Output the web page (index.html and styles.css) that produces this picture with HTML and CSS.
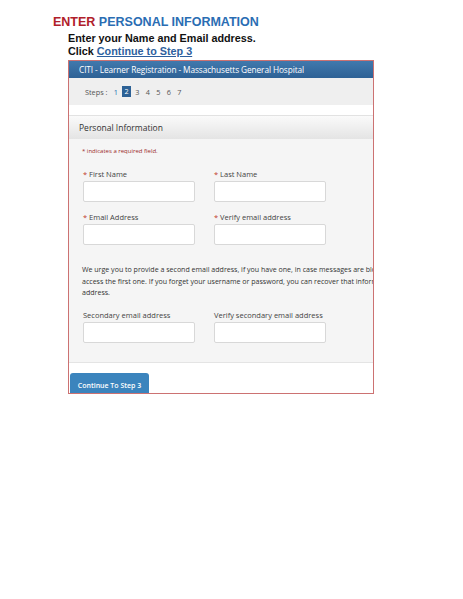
FILE: index.html
```html
<!DOCTYPE html>
<html>
<head>
<meta charset="utf-8">
<link rel="stylesheet" href="styles.css">
</head>
<body>
<div class="doc">
  <div class="title"><span class="red">ENTER</span> <span class="blue">PERSONAL INFORMATION</span></div>
  <div class="instr first">Enter your Name and Email address.</div>
  <div class="instr">Click <a class="lnk" href="#">Continue to Step 3</a></div>

  <div class="frame">
    <div class="appbar">CITI - Learner Registration - Massachusetts General Hospital</div>
    <div class="steps">
      <span class="steplabel">Steps :</span>
      <span class="step done">1</span>
      <span class="step cur">2</span>
      <span class="step">3</span>
      <span class="step">4</span>
      <span class="step">5</span>
      <span class="step">6</span>
      <span class="step">7</span>
    </div>
    <div class="gap"></div>
    <div class="panel">
      <div class="panel-head">Personal Information</div>
      <div class="panel-body">
        <div class="req">* indicates a required field.</div>
        <div class="row">
          <div class="field"><div class="lbl"><span class="ast">*</span> First Name</div><div class="inp"></div></div>
          <div class="field"><div class="lbl"><span class="ast">*</span> Last Name</div><div class="inp"></div></div>
        </div>
        <div class="row">
          <div class="field"><div class="lbl"><span class="ast">*</span> Email Address</div><div class="inp"></div></div>
          <div class="field"><div class="lbl"><span class="ast">*</span> Verify email address</div><div class="inp"></div></div>
        </div>
        <p class="para">We urge you to provide a second email address, if you have one, in case messages are blocked or you lose the ability to<br>access the first one. If you forget your username or password, you can recover that information using either email<br>address.</p>
        <div class="row">
          <div class="field"><div class="lbl">Secondary email address</div><div class="inp"></div></div>
          <div class="field"><div class="lbl">Verify secondary email address</div><div class="inp"></div></div>
        </div>
      </div>
    </div>
    <div class="foot">
      <div class="btn">Continue To Step 3</div>
    </div>
  </div>
</div>
</body>
</html>
```

FILE: styles.css
```css
html, body { margin: 0; padding: 0; background: #fff; }
body { font-family: "Liberation Sans", Arial, sans-serif; }
.doc { padding: 15px 0 0 53px; }
.title { font-size: 12.5px; font-weight: bold; line-height: 15px; }
.red { color: #b0202a; }
.blue { color: #2a6db3; }
.instr { font-size: 10.8px; font-weight: bold; color: #111; padding-left: 15px; line-height: 13px; }
.instr.first { margin-top: 2px; }
.lnk { color: #2d5f9e; text-decoration: underline; }

.frame {
  margin: 2px 0 0 15px;
  width: 304px;
  height: 332px;
  border: 1.5px solid #cc7272;
  overflow: hidden;
  font-family: "Open Sans", sans-serif;
  background: #fff;
}
.appbar {
  height: 17px;
  line-height: 17px;
  background: linear-gradient(#4179ad, #2d6195);
  color: #fff;
  font-size: 8.3px;
  padding-left: 10px;
  white-space: nowrap;
  letter-spacing: -0.1px;
}
.steps {
  height: 27px;
  background: #efefef;
  display: flex;
  align-items: center;
  padding-left: 16px;
  font-size: 7.3px;
  color: #555;
}
.steplabel { margin-right: 3px; }
.step { width: 10.5px; text-align: center; }
.step.done { color: #2d6fb0; }
.step.cur { background: #2d6195; color: #fff; width: 9px; height: 11px; line-height: 11px; margin: 0 1px; }
.gap { height: 10px; background: #fff; }
.panel { width: 400px; }
.panel-head {
  height: 23px;
  line-height: 23px;
  border-top: 1px solid #e2e2e2;
  background: linear-gradient(#fafafa, #e4e4e4);
  padding-left: 10px;
  font-size: 8.5px;
  color: #333;
}
.panel-body {
  background: #f5f5f5;
  height: 224px;
  padding: 8px 0 0 13px;
  box-sizing: border-box;
  border-bottom: 1px solid #e4e4e4;
}
.req { font-size: 6px; color: #9b2a2a; line-height: 9px; }
.row { display: flex; margin-top: 13px; }
.row + .row { margin-top: 10px; }
.field { width: 130px; padding-left: 1px; }
.lbl { font-size: 7.5px; color: #444; line-height: 10px; margin-bottom: 2px; }
.ast { color: #c0392b; }
.inp { width: 110px; height: 19px; background: #fff; border: 1px solid #d8d8d8; border-radius: 2px; }
.para { margin: 19px 0 0; font-size: 7.05px; line-height: 11.5px; color: #333; white-space: nowrap; }
.para + .row { margin-top: 11px; }
.foot { padding: 10px 0 0 1px; }
.btn {
  width: 79px;
  height: 24px;
  background: #3b84bd;
  border-radius: 3px 3px 0 0;
  color: #fff;
  font-size: 7px;
  font-weight: 600;
  line-height: 26px;
  text-align: center;
}
```
